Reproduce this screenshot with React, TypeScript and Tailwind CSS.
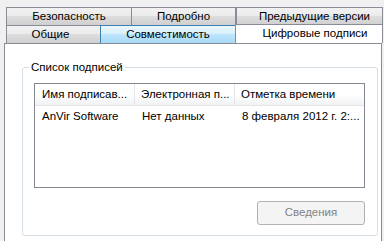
import React from "react";

const font = { fontFamily: '"Liberation Sans", Arial, sans-serif' };

function Tab({ label, w, variant = "normal", extra = "" }: { label: string; w: string; variant?: "normal" | "hover"; extra?: string }) {
  const bg =
    variant === "hover"
      ? "bg-[linear-gradient(#eaf6fd_0%,#d9f0fc_45%,#bee6fd_50%,#a7d9f5_100%)] border-[#3c7fb1]"
      : "bg-[linear-gradient(#f2f2f2_0%,#ebebeb_45%,#dddddd_50%,#cfcfcf_100%)] border-[#898c95]";
  return (
    <div
      className={`${w} ${extra} h-full -ml-px first:ml-0 border border-b-0 ${bg} flex items-center justify-center text-[11.5px] text-black leading-none whitespace-nowrap`}
    >
      {label}
    </div>
  );
}

export default function App() {
  return (
    <div className="w-[384px] h-[241px] bg-[#f0f0f0] overflow-hidden" style={font}>
      <div className="pt-[7px]">
        <div className="flex h-[18px] ml-[6px]">
          <Tab label="Безопасность" w="w-[126px]" />
          <Tab label="Подробно" w="w-[105px]" />
          <div className="w-[1px]" />
          <Tab label="Предыдущие версии" w="w-[147px]" extra="pl-[10px]" />
        </div>
        <div className="flex h-[18px] ml-[6px] relative z-10">
          <Tab label="Общие" w="w-[95px]" extra="pr-[6px]" />
          <Tab label="Совместимость" w="w-[136px]" variant="hover" />
          <div className="w-[148px] h-[19px] -mt-px -ml-px pl-[12px] bg-white border border-b-0 border-[#898c95] flex items-center justify-center text-[11.5px] text-black leading-none whitespace-nowrap">
            Цифровые подписи
          </div>
        </div>
        <div className="ml-[4px] w-[378px] h-[200px] bg-white border border-[#898c95] pt-[23px] pl-[17px]">
          <div className="relative w-[356px] h-[169px] border border-[#d5dfe5] rounded-[3px] pt-[15px] pl-[11px]">
            <div className="absolute left-[6px] -top-[8px] bg-white px-[2px] text-[11.5px] leading-[15px] text-black whitespace-nowrap">
              Список подписей
            </div>
            <div className="w-[331px] h-[105px] border border-[#828790] bg-white">
              <div className="flex h-[22px] bg-[linear-gradient(#ffffff_0%,#ffffff_50%,#f1f2f4_100%)] border-b border-[#e5e5e5] text-[11.5px] text-black whitespace-nowrap">
                <div className="w-[100px] border-r border-[#e3e5e8] flex items-center pl-[7px] overflow-hidden">Имя подписав...</div>
                <div className="w-[100px] border-r border-[#e3e5e8] flex items-center pl-[6px] overflow-hidden">Электронная п...</div>
                <div className="flex-1 flex items-center pl-[6px]">Отметка времени</div>
              </div>
              <div className="flex h-[21px] text-[11.5px] text-black whitespace-nowrap">
                <div className="w-[100px] flex items-center pl-[7px]">AnVir Software</div>
                <div className="w-[100px] flex items-center pl-[7px]">Нет данных</div>
                <div className="flex-1 flex items-center pl-[7px]">8 февраля 2012 г. 2:...</div>
              </div>
            </div>
            <div className="flex justify-end pr-[12px] mt-[13px]">
              <div className="w-[108px] h-[24px] rounded-[3px] border border-[#adb2b5] bg-[#f4f4f4] flex items-center justify-center text-[11.5px] text-[#838383]">
                Сведения
              </div>
            </div>
          </div>
        </div>
      </div>
    </div>
  );
}
